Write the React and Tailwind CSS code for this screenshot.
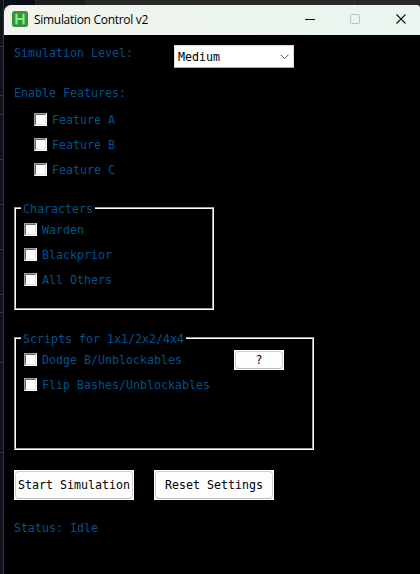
const gridLines = [
  'mt-[46px]', 'mt-[48px]', 'mt-[18px]', 'mt-[44px]', 'mt-[44px]', 'mt-[44px]', 'mt-[44px]', 'mt-[17px]', 'mt-[49px]', 'mt-[89px]',
];

function Check({ label, className = '' }) {
  return (
    <label className={`flex h-[25px] items-start ${className}`}>
      <span className="h-[13px] w-[13px] shrink-0 border border-t-[#a0a0a0] border-l-[#a0a0a0] border-r-white border-b-white">
        <span className="block h-[11px] w-[11px] border border-t-[#696969] border-l-[#696969] border-r-[#e3e3e3] border-b-[#e3e3e3] bg-white" />
      </span>
      <span className="ml-[5px] leading-[15px] whitespace-pre">{label}</span>
    </label>
  );
}

function Group({ title, className, children }) {
  return (
    <section className={`border border-t-[#a0a0a0] border-l-[#a0a0a0] border-r-white border-b-white ${className}`}>
      <div className="h-full border border-t-white border-l-white border-r-[#a0a0a0] border-b-[#a0a0a0]">
        <div className="-mt-[8px] ml-[5px] flex h-[15px] w-fit bg-black px-[2px] leading-[17px] whitespace-pre">{title}</div>
        <div className="pt-[7px] pl-[8px]">{children}</div>
      </div>
    </section>
  );
}

function Button({ children, className }) {
  return (
    <button className={`bg-white p-px text-black ${className}`}>
      <span className="flex h-full w-full items-center justify-center rounded-[4px] border border-[#d0d0d0] border-b-[#b8b8b8] bg-[#fdfdfd] pt-[2px] whitespace-pre">
        {children}
      </span>
    </button>
  );
}

export default function App() {
  return (
    <div className="flex h-[574px] w-[420px] overflow-hidden bg-[#0b0e17] font-['DejaVu_Sans_Mono',monospace] text-[11.63px] text-[#00528e]">
      <div className="h-full w-[4px] shrink-0 border-r border-[#33343b] bg-[#0d121b]">
        {gridLines.map((m, i) => (
          <div key={i} className={`h-px bg-[#34373f] ${m}`} />
        ))}
      </div>
      <div className="flex w-[416px] flex-col">
        <div className="flex h-[5px] shrink-0">
          <div className="w-[31px] bg-[#0b0e17]" />
          <div className="w-[50px] border-l border-[#303030] bg-[#1f1f20]" />
          <div className="w-[272px] bg-[#292929]" />
          <div className="flex-1 border-l border-[#1c1c1c] bg-[#292929]" />
        </div>
        <header className="flex h-[30px] shrink-0 items-center rounded-tl-[7px] rounded-tr-[3px] bg-gradient-to-r from-[#f1f4ec] to-[#e8f6ef] pl-[8px] text-black">
          <svg width="16" height="16" viewBox="0 0 16 16" className="shrink-0 -translate-y-px">
            <rect width="16" height="16" rx="2.5" fill="#3f9142" />
            <path d="M4.500 3.500v9M11.500 3.500v9M4.500 8h7" fill="none" stroke="#7df48a" strokeWidth="2.2" strokeLinecap="round" />
          </svg>
          <h1 className="ml-[6px] w-[130px] font-['Open_Sans','Noto_Sans',sans-serif] text-[12px] leading-[16px] tracking-[-0.3px] whitespace-nowrap">
            Simulation Control v2
          </h1>
          <svg width="102" height="12" viewBox="0 0 102 12" className="ml-[141px] shrink-0 -translate-y-px" fill="none">
            <path d="M0 6.5h10" stroke="#111" />
            <rect x="45.5" y="1.5" width="9" height="9" rx="1" stroke="#b8c5bd" />
            <path d="M91.500 1.500l9 9M100.500 1.500l-9 9" stroke="#111" strokeWidth="1.1" />
          </svg>
        </header>
        <main className="flex flex-1 flex-col bg-black pl-[10px]">
          <div className="flex pt-[10px]">
            <span className="w-[160px] leading-[17px]">Simulation Level:</span>
            <div className="flex h-[23px] w-[120px] items-center justify-between rounded-[1px] border border-[#dcdcdc] border-b-[#aaa] bg-white pr-[4px] pl-[3px] text-black">
              <span className="pt-[2px]">Medium</span>
              <svg width="9" height="6" viewBox="0 0 9 6" fill="none">
                <path d="M.5.7l4 4 4-4" stroke="#555" />
              </svg>
            </div>
          </div>
          <div className="mt-[17px] h-[28px] leading-[17px]">Enable Features:</div>
          <div className="ml-[20px] h-[94px]">
            <Check label="Feature A" />
            <Check label="Feature B" />
            <Check label="Feature C" />
          </div>
          <Group title="Characters" className="h-[103px] w-[200px]">
            <Check label="Warden" />
            <Check label="Blackprior" />
            <Check label="All Others" />
          </Group>
          <Group title="Scripts for 1x1/2x2/4x4" className="mt-[27px] h-[113px] w-[300px]">
            <div className="flex h-[25px] items-start">
              <Check label="Dodge B/Unblockables" className="w-[210px]" />
              <Button className="-mt-[3px] h-[20px] w-[50px]">?</Button>
            </div>
            <Check label="Flip Bashes/Unblockables" />
          </Group>
          <div className="mt-[20px] flex gap-[20px]">
            <Button className="h-[30px] w-[120px]">Start Simulation</Button>
            <Button className="h-[30px] w-[120px]">Reset Settings</Button>
          </div>
          <div className="mt-[20px] leading-[17px]">Status: Idle</div>
        </main>
      </div>
    </div>
  );
}
